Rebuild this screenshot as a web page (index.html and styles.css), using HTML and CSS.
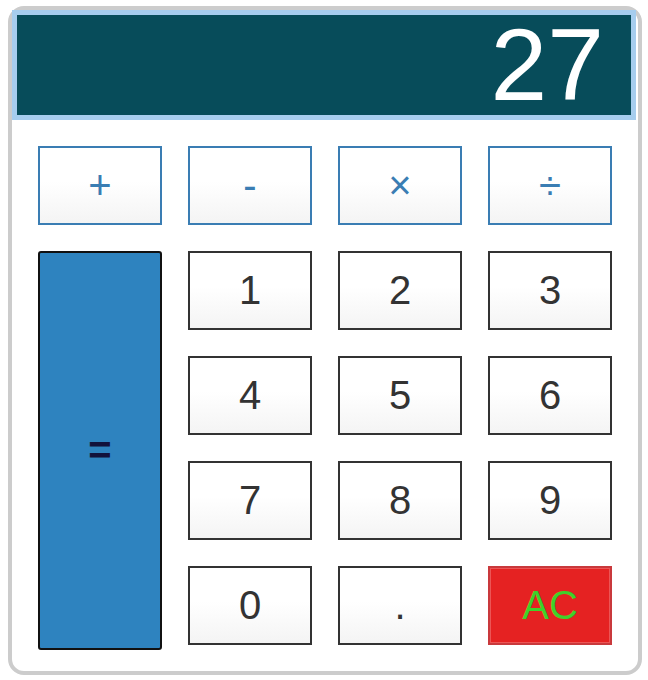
FILE: index.html
```html
<!DOCTYPE html>
<html>
<head>
<meta charset="utf-8">
<link rel="stylesheet" href="styles.css">
</head>
<body>
<div class="calc">
  <div class="display">27</div>
  <div class="keys">
    <button class="key op">+</button>
    <button class="key op">-</button>
    <button class="key op">×</button>
    <button class="key op">÷</button>
    <button class="key equals">=</button>
    <button class="key num">1</button>
    <button class="key num">2</button>
    <button class="key num">3</button>
    <button class="key num">4</button>
    <button class="key num">5</button>
    <button class="key num">6</button>
    <button class="key num">7</button>
    <button class="key num">8</button>
    <button class="key num">9</button>
    <button class="key num">0</button>
    <button class="key num">.</button>
    <button class="key clear">AC</button>
  </div>
</div>
</body>
</html>
```
FILE: styles.css
```css
html, body {
  margin: 0;
  padding: 0;
  background: #ffffff;
}
body {
  padding: 6px 0 0 8px;
  font-family: "Liberation Sans", Arial, sans-serif;
}
.calc {
  box-sizing: border-box;
  width: 634px;
  height: 669px;
  border: 4px solid #cccccc;
  border-radius: 16px;
  background: #ffffff;
}
.display {
  box-sizing: border-box;
  height: 110px;
  margin-right: 2px;
  border: 5px solid #a6cdee;
  background: #074c5a;
  color: #ffffff;
  font-size: 102px;
  line-height: 100px;
  text-align: right;
  padding-right: 27px;
}
.keys {
  display: grid;
  grid-template-columns: repeat(4, 124px);
  grid-template-rows: repeat(5, 79px);
  column-gap: 26px;
  row-gap: 26px;
  padding: 26px 26px 26px 26px;
}
.key {
  box-sizing: border-box;
  margin: 0;
  padding: 0;
  font-family: "Liberation Sans", Arial, sans-serif;
  font-size: 40px;
  display: flex;
  align-items: center;
  justify-content: center;
  background: linear-gradient(to bottom, #ffffff 0%, #ffffff 45%, #f4f4f4 100%);
  border: 2px solid #333333;
  border-radius: 0;
  color: #333333;
}
.op {
  border-color: #3a7db3;
  color: #3a7db3;
  font-size: 40px;
}
.equals {
  grid-column: 1;
  grid-row: 2 / span 4;
  align-self: start;
  height: 399px;
  background: #2e83bf;
  border: 2px solid #111111;
  border-radius: 3px;
  color: #12123c;
  font-size: 40px;
  font-weight: bold;
}
.clear {
  background: #e52222;
  border: 2px solid #c9393c;
  box-shadow: inset 0 0 0 1px #ec5555;
  color: #3fd12a;
  font-size: 40px;
}
```
